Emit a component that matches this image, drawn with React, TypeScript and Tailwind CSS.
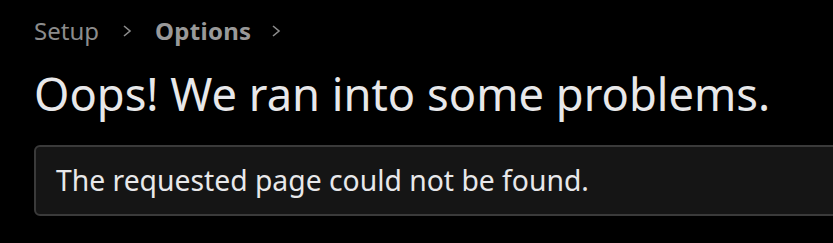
import React from "react";

export default function App() {
  return (
    <div className="w-[833px] h-[243px] overflow-hidden bg-black" style={{ fontFamily: '"Noto Sans", "Open Sans", sans-serif' }}>
      <div className="pl-[34px] pt-[14px]">
        <nav className="flex items-center text-[24px] leading-[34px] text-[#8c8c8c]">
          <span>Setup</span>
          <svg className="ml-[22px] mr-[22px]" width="12" height="14" viewBox="0 0 12 14" fill="none" stroke="#8c8c8c" strokeWidth="1.6"><path d="M3 2l6 5-6 5" /></svg>
          <span className="font-bold text-[#999999] tracking-[0.3px]">Options</span>
          <svg className="ml-[19px]" width="12" height="14" viewBox="0 0 12 14" fill="none" stroke="#8c8c8c" strokeWidth="1.6"><path d="M3 2l6 5-6 5" /></svg>
        </nav>
        <h1 className="mt-[16px] text-[45.3px] leading-[60px] text-[#e8e8ea] font-normal">Oops! We ran into some problems.</h1>
        <div className="mt-[21px] w-[900px] h-[71px] flex items-center rounded-[6px] border-2 border-[#3a3a3a] bg-[#151515] pl-[20px]">
          <span className="text-[28.3px] text-[#e8e8ea]">The requested page could not be found.</span>
        </div>
      </div>
    </div>
  );
}
